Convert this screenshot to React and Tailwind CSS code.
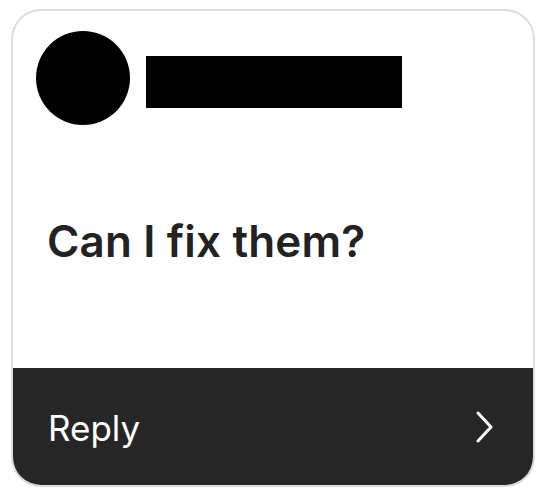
export default function App() {
  return (
    <div className="min-h-[499px] w-[544px] bg-white pl-[11px] pt-[9px]" style={{ fontFamily: 'Inter, "Noto Sans", sans-serif' }}>
      <div className="flex h-[478px] w-[524px] flex-col overflow-hidden rounded-[30px] border-2 border-[#dcdcdc] bg-white">
        <div className="flex flex-1 flex-col px-[23px] pt-[20px]">
          <div className="flex items-start gap-4">
            <div className="h-[94px] w-[94px] shrink-0 rounded-full bg-black" />
            <div className="mt-[25px] h-[52px] w-[256px] bg-black" />
          </div>
          <h1 className="ml-[11px] mt-[94px] text-[44px] font-semibold leading-none tracking-[0.15px] text-[#222222]">
            Can I fix them?
          </h1>
        </div>
        <div className="flex h-[117px] items-center justify-between bg-[#262626] pl-[35px] pr-[39px] pt-[3px]">
          <span className="text-[35px] leading-none text-white">Reply</span>
          <svg width="18" height="32" viewBox="0 0 18 32" fill="none" className="mt-[-3px]">
            <path d="M2 2 L15 16 L2 30" stroke="white" strokeWidth="3" strokeLinecap="round" strokeLinejoin="round" />
          </svg>
        </div>
      </div>
    </div>
  );
}
